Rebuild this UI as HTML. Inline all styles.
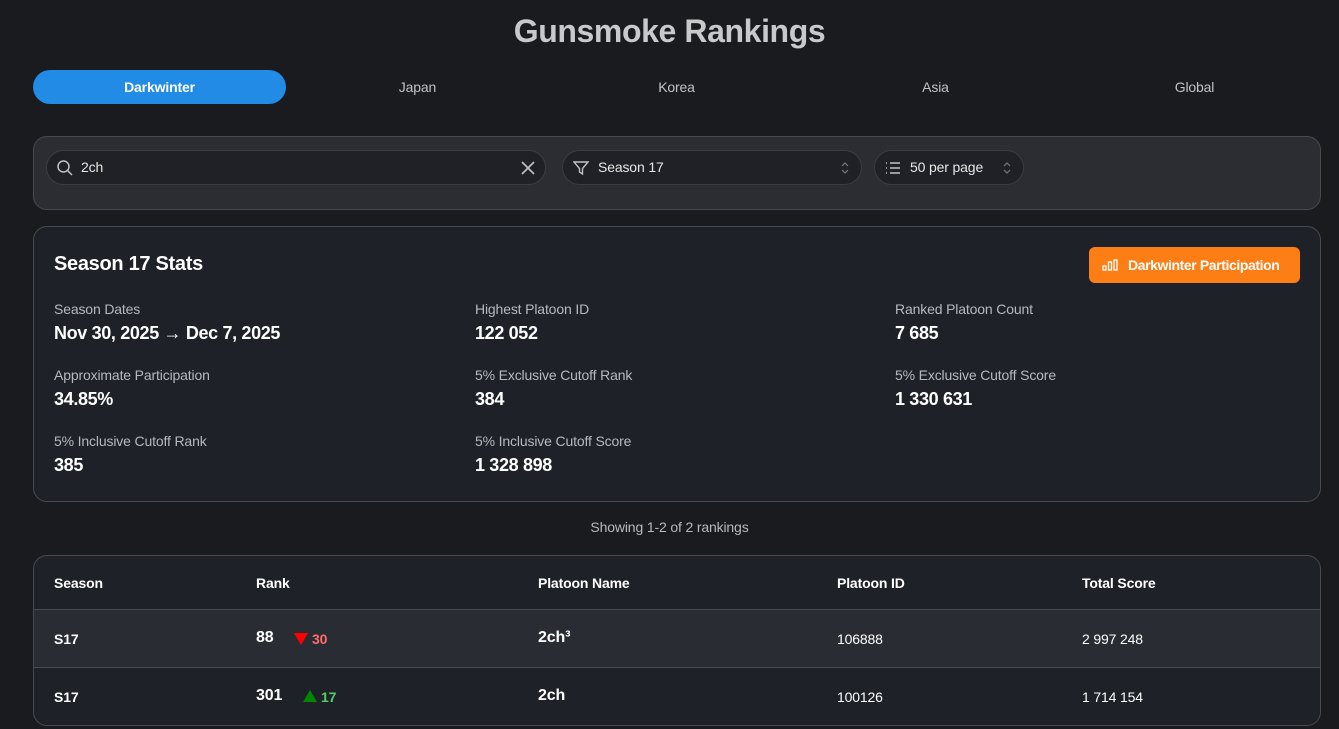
<!DOCTYPE html>
<html><head><meta charset="utf-8"><style>
*{box-sizing:border-box;margin:0;padding:0}
body{width:1339px;height:729px;overflow:hidden;background:#1a1b1e;font-family:"Liberation Sans",Roboto,sans-serif;color:#fff;position:relative;letter-spacing:-0.15px}
.abs{position:absolute}
h1{position:absolute;left:0;right:0;top:13px;text-align:center;font-size:32px;font-weight:700;color:#c9c9cc;letter-spacing:-0.4px}
.tab{position:absolute;top:70px;height:34px;width:253px;line-height:34px;text-align:center;font-size:14px;color:#c1c2c5}
.tab.on{background:#228be6;color:#fff;font-weight:700;border-radius:17px}
.filters{left:33px;top:136px;width:1288px;height:74px;background:#2b2d33;border:1px solid #474a52;border-radius:14px}
.inp{position:absolute;top:13px;height:35px;border:1px solid #3a3c43;background:#1f2127;border-radius:18px;font-size:14px;line-height:33px;color:#e6e6e6}
.stats{left:33px;top:226px;width:1288px;height:276px;background:#1f2129;border:1px solid #474a52;border-radius:14px}
.lab{position:absolute;font-size:14px;color:#b8b9bd}
.val{position:absolute;font-size:18px;font-weight:700;color:#fff;letter-spacing:-0.35px}
.btn{position:absolute;left:1055px;top:20px;width:211px;height:36px;background:#fd7e14;border-radius:6px;font-size:14px;font-weight:700;line-height:36px;padding-left:39px;letter-spacing:-0.4px}
.tbl{left:33px;top:555px;width:1288px;height:171px;background:#1f2129;border:1px solid #474a52;border-radius:14px;overflow:hidden}
.row{position:absolute;left:0;width:100%;font-size:14px}
.row span{position:absolute}
</style></head><body>
<h1>Gunsmoke Rankings</h1>
<div class="tab on" style="left:33px">Darkwinter</div>
<div class="tab" style="left:291px">Japan</div>
<div class="tab" style="left:550px">Korea</div>
<div class="tab" style="left:809px">Asia</div>
<div class="tab" style="left:1068px">Global</div>

<div class="abs filters">
 <div class="inp" style="left:12px;width:500px;padding-left:34px">2ch
  <svg style="position:absolute;left:10px;top:9px" width="16" height="16" viewBox="0 0 16 16" fill="none" stroke="#c1c2c5" stroke-width="1.5"><circle cx="6.5" cy="6.5" r="5.5"/><path d="M10.5 10.5L15 15"/></svg>
  <svg style="position:absolute;right:10px;top:10px" width="14" height="14" viewBox="0 0 14 14" stroke="#c1c2c5" stroke-width="1.6"><path d="M1 1L13 13M13 1L1 13"/></svg>
 </div>
 <div class="inp" style="left:528px;width:300px;padding-left:35px">Season 17
  <svg style="position:absolute;left:10px;top:9px" width="16" height="16" viewBox="0 0 16 16" fill="none" stroke="#c1c2c5" stroke-width="1.4"><path d="M1 2H15L9.5 8.5V14L6.5 12V8.5Z"/></svg>
  <svg style="position:absolute;right:12px;top:11px" width="8" height="12" viewBox="0 0 8 12" fill="none" stroke="#777" stroke-width="1.2"><path d="M1 4L4 1L7 4M1 8L4 11L7 8"/></svg>
 </div>
 <div class="inp" style="left:840px;width:150px;padding-left:35px">50 per page
  <svg style="position:absolute;left:10px;top:10px" width="16" height="14" viewBox="0 0 16 14" fill="none" stroke="#c1c2c5" stroke-width="1.4"><path d="M5 2H15M5 7H15M5 12H15M1 2H2M1 7H2M1 12H2"/></svg>
  <svg style="position:absolute;right:12px;top:11px" width="8" height="12" viewBox="0 0 8 12" fill="none" stroke="#777" stroke-width="1.2"><path d="M1 4L4 1L7 4M1 8L4 11L7 8"/></svg>
 </div>
</div>

<div class="abs stats">
 <div class="abs" style="left:20px;top:26px;font-size:20px;font-weight:700;letter-spacing:-0.3px">Season 17 Stats</div>
 <div class="btn"><svg style="position:absolute;left:13px;top:12px" width="16" height="12" viewBox="0 0 16 12" fill="none" stroke="#fff" stroke-width="1.3"><rect x="1" y="7" width="3" height="4"/><rect x="6.5" y="3" width="3" height="8"/><rect x="12" y="1" width="3" height="10"/></svg>Darkwinter Participation</div>
 <div class="lab" style="left:20px;top:74px">Season Dates</div><div class="val" style="left:20px;top:96px">Nov 30, 2025 → Dec 7, 2025</div>
 <div class="lab" style="left:441px;top:74px">Highest Platoon ID</div><div class="val" style="left:441px;top:96px">122 052</div>
 <div class="lab" style="left:861px;top:74px">Ranked Platoon Count</div><div class="val" style="left:861px;top:96px">7 685</div>
 <div class="lab" style="left:20px;top:140px">Approximate Participation</div><div class="val" style="left:20px;top:162px">34.85%</div>
 <div class="lab" style="left:441px;top:140px">5% Exclusive Cutoff Rank</div><div class="val" style="left:441px;top:162px">384</div>
 <div class="lab" style="left:861px;top:140px">5% Exclusive Cutoff Score</div><div class="val" style="left:861px;top:162px">1 330 631</div>
 <div class="lab" style="left:20px;top:206px">5% Inclusive Cutoff Rank</div><div class="val" style="left:20px;top:228px">385</div>
 <div class="lab" style="left:441px;top:206px">5% Inclusive Cutoff Score</div><div class="val" style="left:441px;top:228px">1 328 898</div>
</div>

<div class="abs" style="left:0;right:0;top:519px;text-align:center;font-size:14px;color:#b8b9bd">Showing 1-2 of 2 rankings</div>

<div class="abs tbl">
 <div class="row" style="top:0;height:54px;font-weight:700;border-bottom:1px solid #474a52">
  <span style="left:20px;top:19px">Season</span><span style="left:222px;top:19px">Rank</span><span style="left:504px;top:19px">Platoon Name</span><span style="left:803px;top:19px">Platoon ID</span><span style="left:1048px;top:19px">Total Score</span>
 </div>
 <div class="row" style="top:54px;height:58px;background:#2a2c33;border-bottom:1px solid #474a52">
  <span style="left:20px;top:21px;font-weight:700">S17</span>
  <span style="left:222px;top:19px;font-size:16px;font-weight:700">88</span>
  <span style="left:260px;top:23px;width:0;height:0;border-left:7px solid transparent;border-right:7px solid transparent;border-top:12px solid #f00"></span>
  <span style="left:278px;top:21px;color:#ff6b6b;font-weight:700">30</span>
  <span style="left:504px;top:19px;font-size:16px;font-weight:700">2ch³</span>
  <span style="left:803px;top:21px">106888</span><span style="left:1048px;top:21px">2 997 248</span>
 </div>
 <div class="row" style="top:112px;height:58px">
  <span style="left:20px;top:21px;font-weight:700">S17</span>
  <span style="left:222px;top:19px;font-size:16px;font-weight:700">301</span>
  <span style="left:269px;top:22px;width:0;height:0;border-left:7px solid transparent;border-right:7px solid transparent;border-bottom:12px solid #080"></span>
  <span style="left:287px;top:21px;color:#51cf66;font-weight:700">17</span>
  <span style="left:504px;top:19px;font-size:16px;font-weight:700">2ch</span>
  <span style="left:803px;top:21px">100126</span><span style="left:1048px;top:21px">1 714 154</span>
 </div>
</div>
</body></html>
